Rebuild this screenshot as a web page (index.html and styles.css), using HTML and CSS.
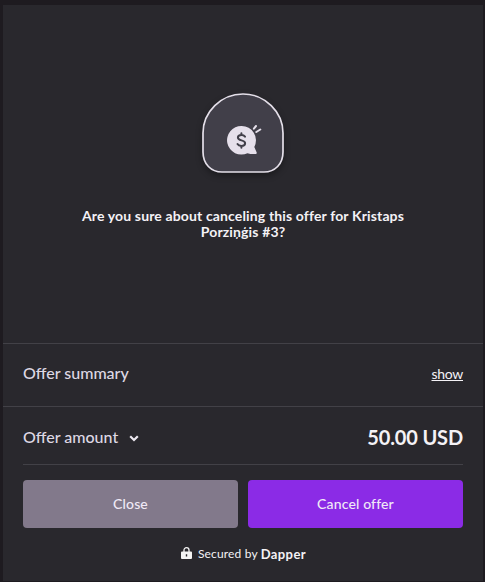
FILE: index.html
```html
<!DOCTYPE html>
<html lang="en">
<head>
  <meta charset="utf-8">
  <title>Cancel offer</title>
  <link rel="stylesheet" href="styles.css">
</head>
<body>
  <div class="modal">
    <div class="confirm">
      <!-- Offer badge -->
      <svg class="badge" width="98" height="98" viewBox="0 0 98 98">
        <path class="badge-shape" d="M49 9C71 9 89 27 89 48V67C89 79 81 87 70 87H28C17 87 9 79 9 67V48C9 27 27 9 49 9Z"/>
        <path class="badge-bubble" d="M47.6 41A14.3 14.3 0 1 0 53.5 68.2Q57 69.3 61.6 69Q63.3 68.8 62.6 67.2L60.3 62A14.3 14.3 0 0 0 47.6 41Z"/>
        <path class="badge-dollar" d="M51 51.6C50.2 50.5 49 50 47.4 50C45.2 50 43.9 51.1 43.9 52.6C43.9 56.4 51.1 54.4 51.1 58.2C51.1 59.9 49.6 61 47.4 61C45.6 61 44.2 60.3 43.5 59.1M47.4 48.3V50M47.4 61V62.7"/>
        <path class="badge-rays" d="M59.9 43.6L62 41M62.3 47L66.3 44.5"/>
      </svg>
      <h1>Are you sure about canceling this offer for Kristaps Porziņģis #3?</h1>
    </div>

    <div class="summary">
      <span class="label">Offer summary</span>
      <a class="show">show</a>
    </div>

    <div class="payment">
      <div class="amount">
        <span class="label">Offer amount</span>
        <svg class="chevron" width="10" height="7" viewBox="0 0 10 7">
          <path d="M1.2 1.2L5 5L8.8 1.2"/>
        </svg>
        <span class="price">50.00 USD</span>
      </div>

      <div class="buttons">
        <button class="btn btn-close">Close</button>
        <button class="btn btn-cancel">Cancel offer</button>
      </div>

      <div class="secured">
        <svg class="lock" width="11" height="12" viewBox="0 0 11 12" fill="#f4f4f4">
          <path d="M3 5V3.1A2.5 2.4 0 0 1 8 3.1V5" fill="none" stroke="#f4f4f4" stroke-width="1.3"/>
          <path fill-rule="evenodd" d="M1 4.4H10Q11 4.4 11 5.4V11Q11 12 10 12H1Q0 12 0 11V5.4Q0 4.4 1 4.4ZM4.8 7.2V9.5H6.2V7.2Z"/>
        </svg>
        <span class="secured-text">Secured by</span>
        <b class="brand">Dapper</b>
      </div>
    </div>
  </div>
</body>
</html>
```
FILE: styles.css
```css
* {
  box-sizing: border-box;
}

body {
  margin: 0;
  height: 582px;
  padding: 5px 2px 1px 3px;
  background: #1e1b20;
  font-family: Lato, "Open Sans", sans-serif;
  color: #f4f2f6;
  overflow: hidden;
}

.modal {
  height: 576px;
  background: #29282d;
}

/* Confirmation message */
.confirm {
  height: 338px;
  padding-top: 80px;
  display: flex;
  flex-direction: column;
  align-items: center;
}

.badge {
  flex: none;
  overflow: visible;
}

.badge-shape {
  fill: #413f49;
  stroke: #e4dfe9;
  stroke-width: 1.7;
  filter: drop-shadow(0 3px 3px rgba(0, 0, 0, 0.35));
}

.badge-bubble {
  fill: #e6e0eb;
}

.badge-dollar {
  fill: none;
  stroke: #413f49;
  stroke-width: 2;
  stroke-linecap: round;
}

.badge-rays {
  fill: none;
  stroke: #e6e0eb;
  stroke-width: 2;
  stroke-linecap: round;
}

h1 {
  width: 340px;
  margin: 25px 0 0;
  font-size: 14px;
  line-height: 16px;
  font-weight: 700;
  letter-spacing: 0.14px;
  text-align: center;
}

/* Offer rows */
.summary {
  height: 63px;
  padding: 0 20px 4px;
  border-top: 1px solid #424147;
  display: flex;
  align-items: center;
  justify-content: space-between;
}

.label {
  font-size: 16px;
  line-height: 20px;
  font-weight: 500;
  color: #ded8e4;
}

.show {
  padding-top: 2px;
  font-size: 14px;
  line-height: 18px;
  letter-spacing: -0.3px;
  text-decoration: underline;
}

.payment {
  padding: 0 20px;
  border-top: 1px solid #424147;
}

.amount {
  height: 58px;
  padding-top: 3px;
  border-bottom: 1px solid #424147;
  display: flex;
  align-items: center;
}

.chevron {
  margin: 2px 0 0 11px;
}

.chevron path {
  fill: none;
  stroke: #ece8f0;
  stroke-width: 2.2;
}

.price {
  margin-left: auto;
  font-size: 20px;
  line-height: 24px;
  font-weight: 700;
  letter-spacing: -0.15px;
}

/* Actions */
.buttons {
  display: flex;
  gap: 10px;
  padding-top: 15px;
}

.btn {
  flex: 1;
  height: 48px;
  padding: 0 0 1px;
  border: none;
  border-radius: 4px;
  font-family: inherit;
  font-size: 14px;
  font-weight: 500;
  letter-spacing: 0.15px;
  color: #f0e9f6;
}

.btn-close {
  background: #82798b;
}

.btn-cancel {
  background: #8b2be6;
}

.secured {
  display: flex;
  align-items: center;
  justify-content: center;
  height: 16px;
  margin-top: 18px;
  padding-left: 1px;
  font-size: 12px;
  line-height: 16px;
}

.lock {
  margin: 0 6px 2px 0;
}

.secured-text {
  letter-spacing: 0.15px;
}

.brand {
  margin-left: 3px;
  font-size: 13px;
  letter-spacing: 0.4px;
}
```
